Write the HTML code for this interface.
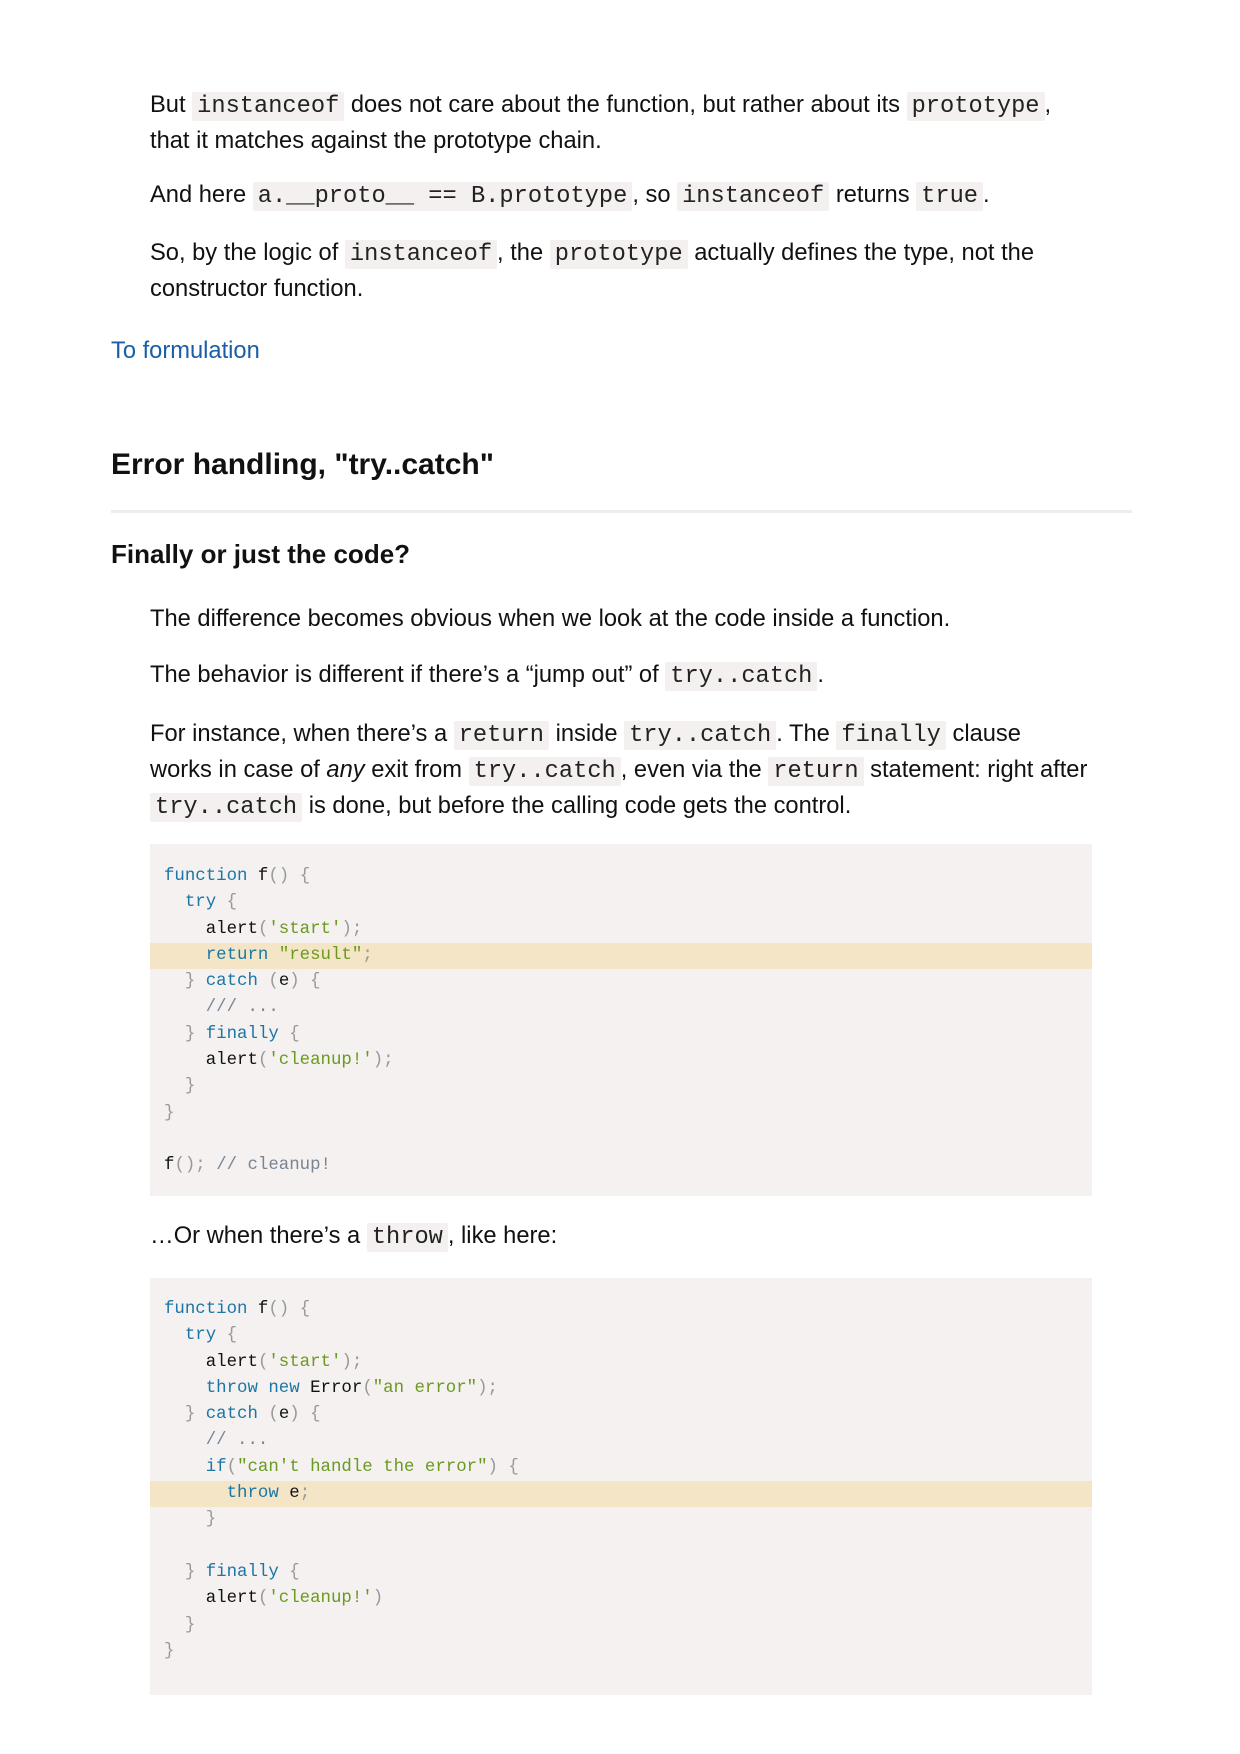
<!DOCTYPE html>
<html><head><meta charset="utf-8">
<style>
html,body{margin:0;padding:0;background:#fff;}
body{width:1240px;height:1754px;position:relative;overflow:hidden;font-family:"Liberation Sans",Arial,sans-serif;color:#111;}
.p{position:absolute;left:150px;width:944px;font-size:23.7px;line-height:34px;margin:0;}
.nw{white-space:nowrap;width:auto;}
code{font-family:"Liberation Mono",monospace;font-size:23.7px;background:#f3f0ef;padding:1px 5px;border-radius:2px;color:#222;}
h2{position:absolute;left:111px;margin:0;font-size:30px;line-height:36px;font-weight:bold;}
h3{position:absolute;left:111px;margin:0;font-size:26px;line-height:30px;font-weight:bold;}
.hr{position:absolute;left:111px;width:1021px;top:510px;height:3px;background:#ededed;}
a{position:absolute;left:111px;font-size:23.7px;line-height:34px;color:#1a5ea5;text-decoration:none;}
pre{position:absolute;left:150px;width:942px;margin:0;background:#f4f1f0;font-family:"Liberation Mono",monospace;font-size:17.4px;line-height:26.3px;color:#111;box-sizing:border-box;}
pre .l{display:block;padding-left:14px;white-space:pre;height:26.3px;}
pre .hl{background:#f4e5c6;}
.k{color:#1b77a6}.s{color:#6a9a1f}.u{color:#999}.c{color:#7a8593}
</style></head><body>

<p class="p" style="top:88px">But <code>instanceof</code> does not care about the function, but rather about its <code>prototype</code>, that it matches against the prototype chain.</p>
<p class="p" style="top:178px">And here <code>a.__proto__ == B.prototype</code>, so <code>instanceof</code> returns <code>true</code>.</p>
<p class="p" style="top:236px">So, by the logic of <code>instanceof</code>, the <code>prototype</code> actually defines the type, not the constructor function.</p>
<a style="top:334px">To formulation</a>

<h2 style="top:447px">Error handling, "try..catch"</h2>
<div class="hr"></div>
<h3 style="top:539px">Finally or just the code?</h3>

<p class="p" style="top:602px">The difference becomes obvious when we look at the code inside a function.</p>
<p class="p" style="top:658px">The behavior is different if there’s a “jump out” of <code>try..catch</code>.</p>
<p class="p nw" style="top:717px">For instance, when there’s a <code>return</code> inside <code>try..catch</code>. The <code>finally</code> clause<br>works in case of <i>any</i> exit from <code>try..catch</code>, even via the <code>return</code> statement: right after<br><code>try..catch</code> is done, but before the calling code gets the control.</p>

<pre style="top:844px;height:352px;padding-top:20px"><span class="l"><span class="k">function</span> f<span class="u">()</span> <span class="u">{</span></span><span class="l">  <span class="k">try</span> <span class="u">{</span></span><span class="l">    alert<span class="u">(</span><span class="s">'start'</span><span class="u">);</span></span><span class="l hl">    <span class="k">return</span> <span class="s">"result"</span><span class="u">;</span></span><span class="l">  <span class="u">}</span> <span class="k">catch</span> <span class="u">(</span>e<span class="u">)</span> <span class="u">{</span></span><span class="l">    <span class="c">/// ...</span></span><span class="l">  <span class="u">}</span> <span class="k">finally</span> <span class="u">{</span></span><span class="l">    alert<span class="u">(</span><span class="s">'cleanup!'</span><span class="u">);</span></span><span class="l">  <span class="u">}</span></span><span class="l"><span class="u">}</span></span><span class="l"> </span><span class="l">f<span class="u">();</span> <span class="c">// cleanup!</span></span></pre>

<p class="p" style="top:1219px">…Or when there’s a <code>throw</code>, like here:</p>

<pre style="top:1278px;height:417px;padding-top:19px"><span class="l"><span class="k">function</span> f<span class="u">()</span> <span class="u">{</span></span><span class="l">  <span class="k">try</span> <span class="u">{</span></span><span class="l">    alert<span class="u">(</span><span class="s">'start'</span><span class="u">);</span></span><span class="l">    <span class="k">throw</span> <span class="k">new</span> Error<span class="u">(</span><span class="s">"an error"</span><span class="u">);</span></span><span class="l">  <span class="u">}</span> <span class="k">catch</span> <span class="u">(</span>e<span class="u">)</span> <span class="u">{</span></span><span class="l">    <span class="c">// ...</span></span><span class="l">    <span class="k">if</span><span class="u">(</span><span class="s">"can't handle the error"</span><span class="u">)</span> <span class="u">{</span></span><span class="l hl">      <span class="k">throw</span> e<span class="u">;</span></span><span class="l">    <span class="u">}</span></span><span class="l"> </span><span class="l">  <span class="u">}</span> <span class="k">finally</span> <span class="u">{</span></span><span class="l">    alert<span class="u">(</span><span class="s">'cleanup!'</span><span class="u">)</span></span><span class="l">  <span class="u">}</span></span><span class="l"><span class="u">}</span></span></pre>

</body></html>
